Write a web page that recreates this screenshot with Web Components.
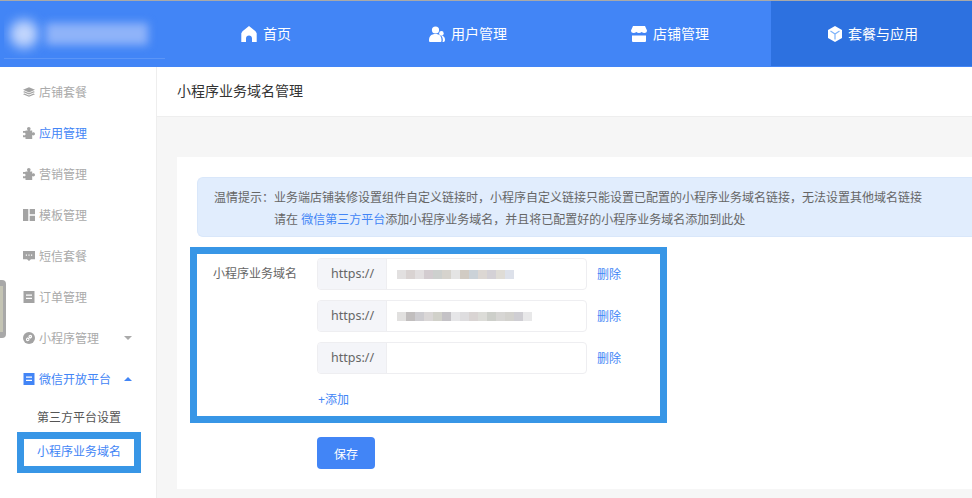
<!DOCTYPE html>
<html lang="zh">
<head>
<meta charset="utf-8">
<title>小程序业务域名管理</title>
<style>
  html, body { margin: 0; height: 100%; }
  body {
    background: #f6f6f6;
    color: #666;
    font: 12px "Liberation Sans", "Noto Sans CJK SC", sans-serif;
    overflow: hidden;
  }
</style>
</head>
<body>
<admin-page></admin-page>
<script>
// Small inline icons, shared by the header and the side menu
const ICONS = {
  home: '<svg viewBox="0 0 16 16" width="16" height="16"><path fill="currentColor" d="M8 0 1.500 5.200.3 7.200V16h4.700v-3.500c0-1.900 1.200-3.100 3-3.100s3 1.200 3 3.100V16h4.700V7.200l-1.200-2z"/></svg>',
  users: '<svg viewBox="0 0 16 16" width="16" height="16"><circle cx="6.500" cy="4" r="3.600" fill="currentColor"/><circle cx="12.400" cy="7.400" r="2.300" fill="currentColor"/><path fill="currentColor" d="M0 14.500C0 10 2.500 8 6.500 8s6 2 6 6.500c0 1-.5 1.500-1.500 1.500H1.500C.5 16 0 15.500 0 14.500zM13.400 16c.3-.5.4-1 .4-1.700 0-1.800-.5-3.300-1.500-4.500 2.300 0 3.700 1.400 3.700 4 0 1.400-.6 2.200-1.600 2.200z"/></svg>',
  shop: '<svg viewBox="0 0 16 16" width="16" height="16"><path fill="currentColor" d="M2 0h12l2 4.500C16 6.200 14.900 7 13.400 7c-1 0-1.900-.4-2.700-1-.8.6-1.700 1-2.700 1s-1.900-.4-2.700-1c-.8.6-1.700 1-2.700 1C1.100 7 0 6.200 0 4.500zM1 9.500h14V15a1 1 0 0 1-1 1H2a1 1 0 0 1-1-1z"/></svg>',
  box: '<svg viewBox="0 0 14 16" width="14" height="16"><path fill="currentColor" d="M7 0 14 4v8l-7 4-7-4V4z"/><path fill="none" stroke="#7db3fa" stroke-width="1.200" d="M2.500 5 7 8l4.500-3M7 8v5.500"/></svg>',
  layers: '<svg viewBox="0 0 12 12" width="12" height="12"><path fill="currentColor" d="M6 1.200 12 3.800 6 6.400 0 3.800z"/><path fill="currentColor" d="M1.400 5.300 6 7.300l4.600-2 1.400.7-6 2.600L0 6z"/><path fill="currentColor" d="M1.400 7.600 6 9.500l4.600-1.900 1.400.7-6 2.500-6-2.500z"/></svg>',
  puzzle: '<svg viewBox="0 0 12 12" width="12" height="12"><path fill="currentColor" d="M2.500 3.500h2.300C4.300 2.900 4 2.400 4 1.800 4 .8 4.800 0 5.800 0s1.800.8 1.800 1.800c0 .6-.3 1.100-.8 1.700h2.400v2.300c.3-.4.700-.6 1.100-.6 1 0 1.700.7 1.700 1.600s-.7 1.600-1.700 1.600c-.4 0-.8-.2-1.100-.5V12H2.500v-1.700H0V8.100c.4.200.8.300 1.100.3.900 0 1.500-.6 1.500-1.300S2 5.800 1.100 5.800c-.3 0-.7.100-1.100.3V3.900h2.500z"/></svg>',
  layout: '<svg viewBox="0 0 12 12" width="12" height="12"><path fill="currentColor" d="M0 0h5.300v12H0zM6.700 0H12v5.300H6.700zM6.700 6.700H12V12H6.700z"/></svg>',
  message: '<svg viewBox="0 0 12 12" width="12" height="12"><path fill="currentColor" d="M0 1h12v8.200H8L6 11 4 9.200H0z"/><path fill="#fff" d="M2.800 4.500h1.200v1.200H2.800zM5.400 4.500h1.200v1.200H5.400zM8 4.500h1.200v1.200H8z"/></svg>',
  order: '<svg viewBox="0 0 12 12" width="12" height="12"><path fill="currentColor" d="M.5 0h11v12H.5z"/><path fill="#fff" d="M3 3.500h6v1.300H3zM3 6.800h6v1.300H3z"/></svg>',
  link: '<svg viewBox="0 0 12 12" width="12" height="12"><circle cx="6" cy="6" r="6" fill="currentColor"/><path fill="none" stroke="#fff" stroke-width="1.100" d="M5 7 7.400 4.600M4.800 5.600 3.800 6.700a1.100 1.100 0 0 0 1.600 1.600l1-1M7.200 6.400l1-1.100a1.100 1.100 0 0 0-1.600-1.600l-1 1"/></svg>',
  wechat: '<svg viewBox="0 0 12 12" width="12" height="12"><path fill="currentColor" d="M.5 0h11v12H.5z"/><path fill="#fff" d="M3 3.500h6v1.300H3zM3 6.800h6v1.300H3z"/></svg>'
};

// One tab in the blue header bar
class NavTab extends HTMLElement {
  connectedCallback() {
    const shadow = this.attachShadow({ mode: "open" });
    shadow.innerHTML = `
      <style>
        :host {
          align-items: center;
          color: #fff;
          display: flex;
          font-size: 14px;
          gap: 6px;
          justify-content: center;
          padding-bottom: 2px;
          padding-right: 3px;
        }
        :host([icon="home"]) { padding-right: 5px; }
        :host([icon="shop"]) { padding-right: 1px; }
        :host([active]) {
          background: #2d71e0;
          margin-bottom: 1px;
          padding-bottom: 1px;
          padding-left: 3px;
          padding-right: 0;
        }
        svg { display: block; margin-top: 2px; }
      </style>
      ${ICONS[this.getAttribute("icon")]}
      <slot></slot>
    `;
  }
}

// The header: blurred logo plus four tabs
class AppHeader extends HTMLElement {
  connectedCallback() {
    const shadow = this.attachShadow({ mode: "open" });
    shadow.innerHTML = `
      <style>
        :host {
          background: #4285f6;
          border-top: 1px solid #a9a9a9;
          display: grid;
          grid-template-columns: 168px repeat(4, 1fr);
          height: 66px;
        }
        .logo {
          align-items: center;
          border-bottom: 1px solid #5b95f7;
          box-sizing: border-box;
          display: flex;
          gap: 8px;
          height: 58px;
          margin-left: 4px;
          overflow: hidden;
          padding: 8px 0 0 6px;
          width: 161px;
        }
        .mark {
          background: #c3d6fc;
          border-radius: 50%;
          filter: blur(6px);
          flex: none;
          height: 28px;
          width: 28px;
        }
        .name {
          background: #8fb3f9;
          filter: blur(4px);
          flex: none;
          height: 22px;
          width: 102px;
        }
      </style>
      <div class="logo"><div class="mark"></div><div class="name"></div></div>
      <slot></slot>
    `;
  }
}

// A row in the side menu
class SideItem extends HTMLElement {
  connectedCallback() {
    const shadow = this.attachShadow({ mode: "open" });
    const arrow = this.getAttribute("arrow");
    shadow.innerHTML = `
      <style>
        :host {
          align-items: center;
          color: #aaa;
          display: flex;
          gap: 4px;
          height: 41px;
          padding-left: 23px;
          position: relative;
        }
        :host([selected]) { color: #4285f6; }
        .icon { color: #a3a3a3; display: flex; }
        :host([open]) .icon { color: #4285f6; }
        .arrow {
          border-left: 4px solid transparent;
          border-right: 4px solid transparent;
          margin-left: auto;
          margin-right: 24px;
        }
        .down { border-top: 4px solid #aaa; }
        .up { border-bottom: 4px solid #4285f6; }
        svg { display: block; }
      </style>
      <span class="icon">${ICONS[this.getAttribute("icon")]}</span>
      <slot></slot>
      ${arrow ? `<span class="arrow ${arrow}"></span>` : ""}
    `;
  }
}

// The second-level links under an open menu row
class SideLink extends HTMLElement {
  connectedCallback() {
    const shadow = this.attachShadow({ mode: "open" });
    shadow.innerHTML = `
      <style>
        :host {
          align-items: center;
          color: #555;
          display: flex;
          height: 34px;
          padding-left: 37px;
        }
        :host([selected]) { color: #4285f6; }
      </style>
      <slot></slot>
    `;
  }
}

class SideMenu extends HTMLElement {
  connectedCallback() {
    const shadow = this.attachShadow({ mode: "open" });
    shadow.innerHTML = `
      <style>
        :host {
          background: #fff;
          border-right: 1px solid #eee;
          display: block;
          padding-top: 4px;
        }
      </style>
      <slot></slot>
      <slot name="sub"></slot>
    `;
  }
}

// Blue info box above the form
class NoticeBox extends HTMLElement {
  connectedCallback() {
    const shadow = this.attachShadow({ mode: "open" });
    shadow.innerHTML = `
      <style>
        :host {
          background: #e1edfd;
          border: 1px solid #d9e7fa;
          border-radius: 6px 0 0 6px;
          border-right: 0;
          box-sizing: border-box;
          display: grid;
          grid-template-columns: 60px 1fr;
          height: 60px;
          line-height: 22px;
          margin-left: 20px;
          padding: 9px 0 0 16px;
          white-space: nowrap;
        }
        ::slotted(a) { color: #4285f6; text-decoration: none; }
      </style>
      <span>温情提示：</span>
      <div><slot></slot></div>
    `;
  }
}

// https:// input with its delete link; the optional blocks stand for the pixelated value
class DomainRow extends HTMLElement {
  connectedCallback() {
    const shadow = this.attachShadow({ mode: "open" });
    const blocks = (this.getAttribute("blocks") || "").split(" ").filter(Boolean);
    const cells = blocks.map(c => `<i style="background:${c}"></i>`).join("");
    shadow.innerHTML = `
      <style>
        :host {
          align-items: center;
          display: flex;
          gap: 10px;
          height: 32px;
        }
        .field {
          background: #fff;
          border: 1px solid #eeeef1;
          border-radius: 4px;
          box-sizing: border-box;
          display: flex;
          height: 32px;
          overflow: hidden;
          width: 270px;
        }
        .prefix {
          background: #f4f5f9;
          border-right: 1px solid #eeeef1;
          box-sizing: border-box;
          color: #666;
          font: 12.5px/30px "Noto Sans", sans-serif;
          padding-left: 13px;
          width: 69px;
        }
        .value { align-items: center; display: flex; padding-left: 10px; }
        i { display: block; height: 9px; width: 9px; }
        a { color: #4285f6; padding-bottom: 2px; text-decoration: none; }
      </style>
      <div class="field">
        <span class="prefix">https://</span>
        <div class="value">${cells}</div>
      </div>
      <a>删除</a>
    `;
  }
}

// The form card on the right
class DomainForm extends HTMLElement {
  connectedCallback() {
    const shadow = this.attachShadow({ mode: "open" });
    shadow.innerHTML = `
      <style>
        :host {
          background: #fff;
          box-sizing: border-box;
          display: block;
          height: 332px;
          margin: 40px 0 0 20px;
          padding-top: 20px;
        }
        .form {
          display: grid;
          grid-template-columns: 140px 1fr;
          padding-top: 21px;
        }
        label { color: #666; line-height: 32px; padding-left: 36px; }
        .rows { display: flex; flex-direction: column; gap: 10px; }
        .add { color: #4285f6; margin: 6px 0 0 1px; }
        button {
          background: #4285f6;
          border: 0;
          border-radius: 4px;
          color: #fff;
          display: block;
          font: inherit;
          height: 32px;
          margin-top: 20px;
          padding: 0;
          width: 58px;
        }
      </style>
      <slot name="notice"></slot>
      <div class="form">
        <label>小程序业务域名</label>
        <div class="rows">
          <slot></slot>
          <div class="add">+添加</div>
          <button>保存</button>
        </div>
      </div>
    `;
  }
}

// Annotation frame drawn on top of the screenshot
class MarkBox extends HTMLElement {
  connectedCallback() {
    const shadow = this.attachShadow({ mode: "open" });
    shadow.innerHTML = `
      <style>
        :host {
          border: 7px solid #3896e6;
          box-sizing: border-box;
          display: block;
          pointer-events: none;
          position: absolute;
        }
      </style>
    `;
  }
}

// Whole page
class AdminPage extends HTMLElement {
  connectedCallback() {
    const shadow = this.attachShadow({ mode: "open" });
    shadow.innerHTML = `
      <style>
        :host { display: block; height: 498px; overflow: hidden; position: relative; width: 972px; }
        .body { display: grid; grid-template-columns: 157px 1fr; height: 431px; }
        .title {
          background: #fff;
          border-bottom: 1px solid #eee;
          box-sizing: border-box;
          color: #333;
          font-size: 14px;
          height: 50px;
          line-height: 49px;
          padding-left: 20px;
        }
        .handle {
          background: #a8a8a8;
          border-radius: 0 4px 4px 0;
          height: 58px;
          left: 0;
          position: absolute;
          top: 280px;
          width: 6px;
        }
        .handle::after {
          background: #c4c4b4;
          bottom: 6px;
          content: "";
          left: 0;
          position: absolute;
          top: 6px;
          width: 3px;
        }
      </style>
      <app-header>
        <nav-tab icon="home">首页</nav-tab>
        <nav-tab icon="users">用户管理</nav-tab>
        <nav-tab icon="shop">店铺管理</nav-tab>
        <nav-tab icon="box" active>套餐与应用</nav-tab>
      </app-header>
      <div class="body">
        <side-menu>
          <side-item icon="layers">店铺套餐</side-item>
          <side-item icon="puzzle" selected>应用管理</side-item>
          <side-item icon="puzzle">营销管理</side-item>
          <side-item icon="layout">模板管理</side-item>
          <side-item icon="message">短信套餐</side-item>
          <side-item icon="order">订单管理</side-item>
          <side-item icon="link" arrow="down">小程序管理</side-item>
          <side-item icon="wechat" arrow="up" selected open>微信开放平台</side-item>
          <side-link slot="sub">第三方平台设置</side-link>
          <side-link slot="sub" selected>小程序业务域名</side-link>
        </side-menu>
        <div>
          <div class="title">小程序业务域名管理</div>
          <domain-form>
            <notice-box slot="notice">
              业务端店铺装修设置组件自定义链接时，小程序自定义链接只能设置已配置的小程序业务域名链接，无法设置其他域名链接<br>
              请在 <a>微信第三方平台</a>添加小程序业务域名，并且将已配置好的小程序业务域名添加到此处
            </notice-box>
            <domain-row blocks="#e2e0e0 #d9d3d2 #e2dfe0 #d3ccd0 #cdd0ce #d6d3cd #e4e4e4 #d1cbc3 #cbd2d8 #dcd7d3 #d4d1d6 #dfdcd6 #dde1ea"></domain-row>
            <domain-row blocks="#e1e0df #c1bebe #cdccd0 #dad7d7 #d1d1ca #c4c2c6 #e6e6e8 #dedddf #d9d4d3 #dcdcd8 #cdcfca #d7d6d4 #d3d2ce #cfced3 #e8e8e9"></domain-row>
            <domain-row></domain-row>
          </domain-form>
        </div>
      </div>
      <div class="handle"></div>
      <mark-box style="left:190px;top:247px;width:477px;height:176px"></mark-box>
      <mark-box style="left:17px;top:432px;width:124px;height:41px"></mark-box>
    `;
  }
}

customElements.define("nav-tab", NavTab);
customElements.define("app-header", AppHeader);
customElements.define("side-item", SideItem);
customElements.define("side-link", SideLink);
customElements.define("side-menu", SideMenu);
customElements.define("notice-box", NoticeBox);
customElements.define("domain-row", DomainRow);
customElements.define("domain-form", DomainForm);
customElements.define("mark-box", MarkBox);
customElements.define("admin-page", AdminPage);
</script>
</body>
</html>
